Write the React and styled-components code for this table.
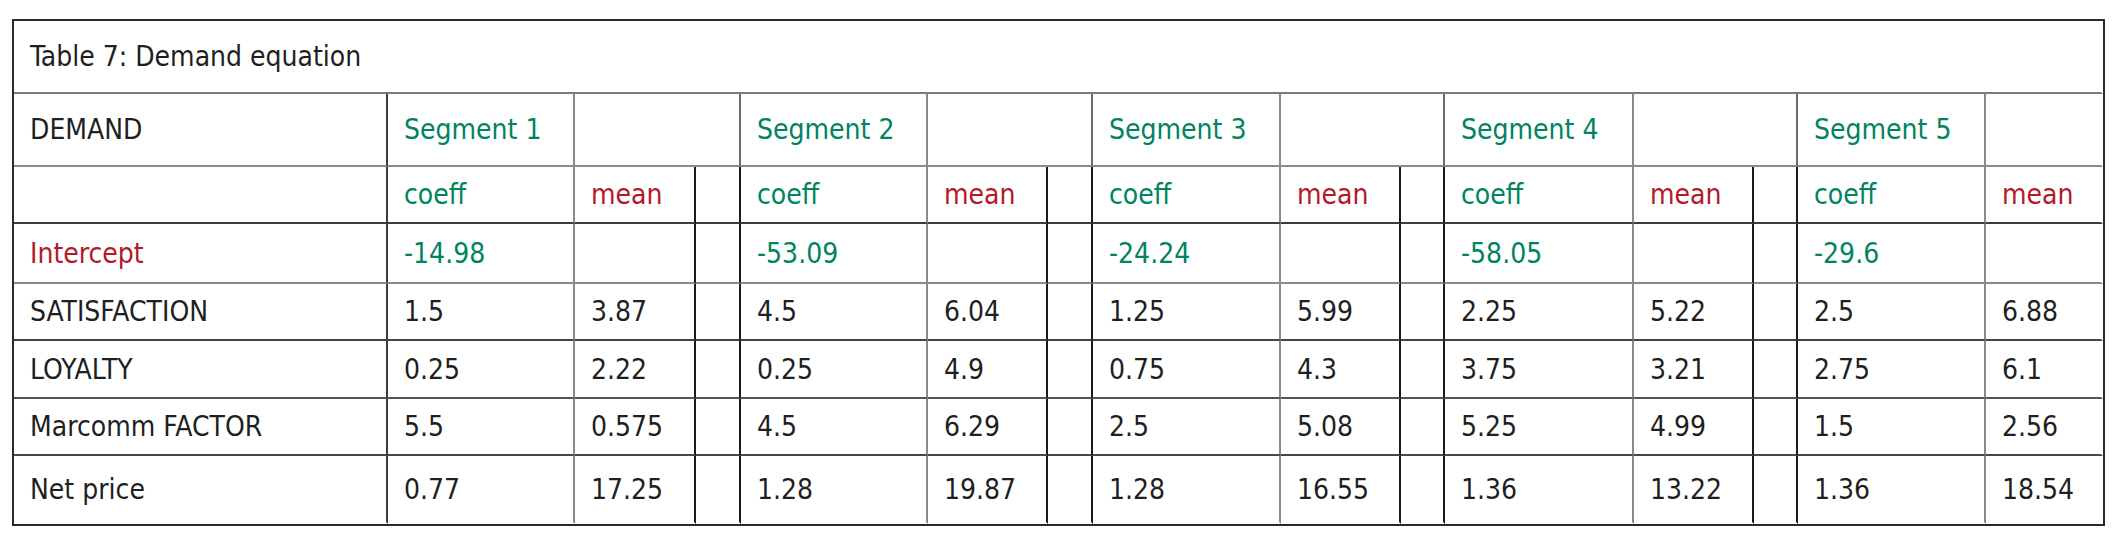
import React from 'react';
import styled, { createGlobalStyle } from 'styled-components';

const colors = {
    text: '#1f1f1f',
    green: '#00835f',
    red: '#b3182b',
    frame: '#2a2a2a',
    dark: '#3c3c3c',
    gray: '#8a8a8a',
    black: '#1a1a1a',
};

const GlobalStyle = createGlobalStyle`
    body {
        margin: 0;
        background: #ffffff;
        font-family: 'DejaVu Sans Condensed', 'DejaVu Sans', sans-serif;
    }
`;

const Page = styled.div`
    padding: 19px 0 0 12px;
`;

// 15 columns: label, then per segment coeff / mean / spacer (no spacer after the last one)
const TableGrid = styled.div`
    display: grid;
    width: 2093px;
    box-sizing: border-box;
    grid-template-columns: 374px 187px 121px 45px 187px 120px 45px 188px 120px 44px 189px 120px 44px 188px 117px;
    grid-template-rows: 73px 73px 57px 60px 57px 58px 57px 68px;
    border: 2px solid ${colors.frame};
`;

const toneColor = {
    green: colors.green,
    red: colors.red,
    plain: colors.text,
};

const Cell = styled.div`
    grid-column: span ${(p) => p.$span || 1};
    box-sizing: border-box;
    display: flex;
    align-items: center;
    padding-left: 16px;
    font-size: 28px;
    white-space: nowrap;
    overflow: hidden;
    color: ${(p) => toneColor[p.$tone || 'plain']};
    border-right: 2px solid ${(p) => p.$right || 'transparent'};
    border-bottom: 2px solid ${(p) => p.$bottom || 'transparent'};
`;

const segments = [
    { name: 'Segment 1', intercept: '-14.98', values: [['1.5', '3.87'], ['0.25', '2.22'], ['5.5', '0.575'], ['0.77', '17.25']] },
    { name: 'Segment 2', intercept: '-53.09', values: [['4.5', '6.04'], ['0.25', '4.9'], ['4.5', '6.29'], ['1.28', '19.87']] },
    { name: 'Segment 3', intercept: '-24.24', values: [['1.25', '5.99'], ['0.75', '4.3'], ['2.5', '5.08'], ['1.28', '16.55']] },
    { name: 'Segment 4', intercept: '-58.05', values: [['2.25', '5.22'], ['3.75', '3.21'], ['5.25', '4.99'], ['1.36', '13.22']] },
    { name: 'Segment 5', intercept: '-29.6', values: [['2.5', '6.88'], ['2.75', '6.1'], ['1.5', '2.56'], ['1.36', '18.54']] },
];

const variables = [
    { label: 'SATISFACTION', line: '#454545' },
    { label: 'LOYALTY', line: '#555555' },
    { label: 'Marcomm FACTOR', line: '#484848' },
    { label: 'Net price', line: null },
];

const isLast = (i) => i === segments.length - 1;

// one row of coeff / mean / spacer cells across all segments
const SegmentCells = ({ rowKey, bottom, render }) =>
    segments.map((seg, i) => {
        const [coeff, mean] = render(seg);
        return (
            <React.Fragment key={`${rowKey}-${i}`}>
                <Cell $tone={coeff.tone} $right={colors.gray} $bottom={bottom}>{coeff.text}</Cell>
                <Cell $tone={mean.tone} $right={isLast(i) ? null : colors.black} $bottom={bottom}>{mean.text}</Cell>
                {!isLast(i) && <Cell $right={colors.black} $bottom={bottom} />}
            </React.Fragment>
        );
    });

const DemandTable = () => {
    return (
        <TableGrid>
            <Cell $span={15} $bottom="#7a7a7a">Table 7: Demand equation</Cell>

            <Cell $right={colors.dark} $bottom={colors.gray}>DEMAND</Cell>
            {segments.map((seg, i) => (
                <React.Fragment key={seg.name}>
                    <Cell $tone="green" $right={colors.gray} $bottom={colors.gray}>{seg.name}</Cell>
                    <Cell $span={isLast(i) ? 1 : 2} $right={isLast(i) ? null : '#6a6a6a'} $bottom={colors.gray} />
                </React.Fragment>
            ))}

            <Cell $right={colors.dark} $bottom={colors.dark} />
            <SegmentCells
                rowKey="head"
                bottom={colors.dark}
                render={() => [{ text: 'coeff', tone: 'green' }, { text: 'mean', tone: 'red' }]}
            />

            <Cell $tone="red" $right={colors.dark} $bottom={colors.gray}>Intercept</Cell>
            <SegmentCells
                rowKey="intercept"
                bottom={colors.gray}
                render={(seg) => [{ text: seg.intercept, tone: 'green' }, { text: '' }]}
            />

            {variables.map((v, r) => (
                <React.Fragment key={v.label}>
                    <Cell $right={colors.dark} $bottom={v.line}>{v.label}</Cell>
                    <SegmentCells
                        rowKey={v.label}
                        bottom={v.line}
                        render={(seg) => [{ text: seg.values[r][0] }, { text: seg.values[r][1] }]}
                    />
                </React.Fragment>
            ))}
        </TableGrid>
    );
};

const App = () => {
    return (
        <>
            <GlobalStyle />
            <Page>
                <DemandTable />
            </Page>
        </>
    );
};

export default App;
